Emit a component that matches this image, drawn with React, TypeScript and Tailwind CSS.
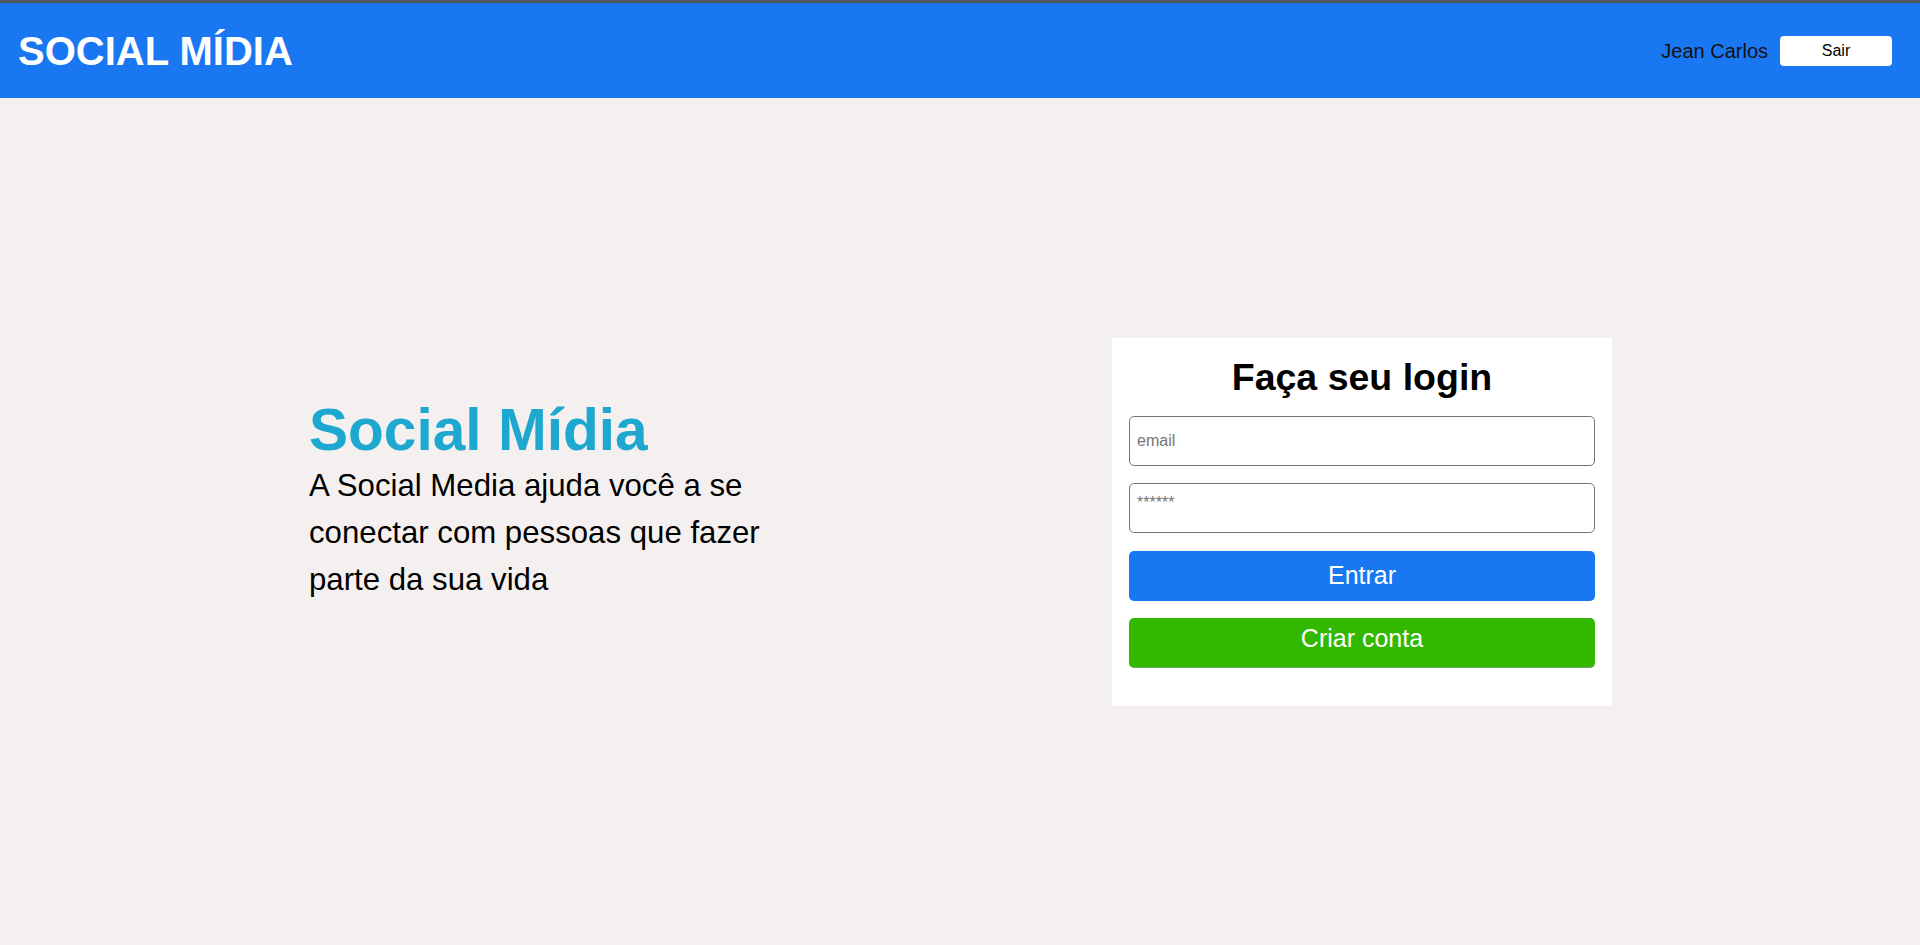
export default function App() {
  return (
    <div className="min-h-[945px] h-[945px] flex flex-col bg-[#f5f0f0]" style={{ fontFamily: '"Liberation Sans", Arial, sans-serif' }}>
      <header className="h-[98px] shrink-0 border-t-[3px] border-[#54585e] bg-[#1a77f2] flex items-center justify-between pl-[18px] pr-[28px]">
        <h1 className="text-[40px] font-bold text-white leading-none">SOCIAL MÍDIA</h1>
        <div className="flex items-center gap-[12px]">
          <span className="text-[20px] text-[#111]">Jean Carlos</span>
          <button className="w-[112px] h-[30px] bg-white rounded-[4px] text-[16px] text-black">Sair</button>
        </div>
      </header>
      <main className="flex-1 flex items-center justify-between pl-[309px] pr-[308px]">
        <div className="w-[500px] -mt-[42px]">
          <h2 className="text-[58.6px] font-bold text-[#1ea8cf] leading-[64px]">Social Mídia</h2>
          <p className="text-[31.2px] leading-[47px] text-black w-[480px]">
            A Social Media ajuda você a se conectar com pessoas que fazer parte da sua vida
          </p>
        </div>
        <div className="w-[500px] h-[368px] bg-white px-[17px] pt-[13px] flex flex-col">
          <h3 className="text-[37.5px] font-bold text-black text-center leading-[52px]">Faça seu login</h3>
          <input
            placeholder="email"
            className="mt-[13px] h-[50px] w-full border border-[#767676] rounded-[5px] px-[7px] text-[16px] placeholder:text-[#757575] outline-none"
          />
          <input
            placeholder="******"
            className="mt-[17px] h-[50px] w-full border border-[#767676] rounded-[5px] px-[7px] pb-[10px] text-[16px] placeholder:text-[#757575] outline-none"
          />
          <button className="mt-[18px] h-[50px] w-full bg-[#1a77f2] rounded-[5px] text-white text-[25px]">Entrar</button>
          <button className="mt-[17px] h-[50px] w-full bg-[#33b800] rounded-[5px] text-white text-[25px] pb-[6px] border-b border-[#6aa86a]">Criar conta</button>
        </div>
      </main>
    </div>
  );
}
